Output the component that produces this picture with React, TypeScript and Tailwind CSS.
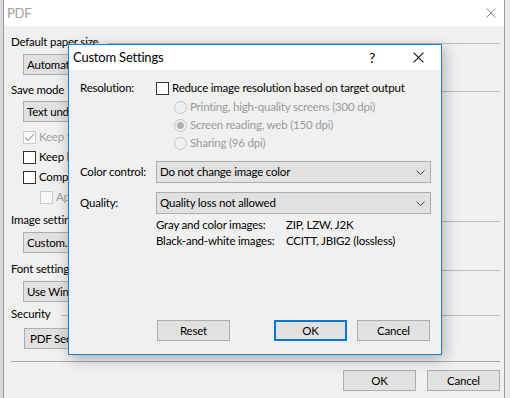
import React from "react";

function Chevron() {
  return (
    <svg width="9" height="5" viewBox="0 0 9 5" className="shrink-0">
      <path d="M0.5 0.5 L4.5 4.5 L8.5 0.5" stroke="#444" strokeWidth="1" fill="none" />
    </svg>
  );
}

function CloseX({ color, size = 10 }: { color: string; size?: number }) {
  return (
    <svg width={size} height={size} viewBox="0 0 10 10">
      <path d="M0.5 0.5 L9.5 9.5 M9.5 0.5 L0.5 9.5" stroke={color} strokeWidth="1" fill="none" />
    </svg>
  );
}

function Box({ disabled, checked }: { disabled?: boolean; checked?: boolean }) {
  return (
    <div
      className={
        "w-[13px] h-[13px] shrink-0 border flex items-center justify-center " +
        (disabled ? "border-[#cccccc] bg-[#f7f7f7]" : "border-[#333333] bg-white")
      }
    >
      {checked && (
        <svg width="11" height="9" viewBox="0 0 11 9">
          <path d="M1 4.5 L4 7.5 L10 1" stroke="#b5b5b5" strokeWidth="1.3" fill="none" />
        </svg>
      )}
    </div>
  );
}

function Radio({ selected }: { selected?: boolean }) {
  return (
    <div className="w-[13px] h-[13px] shrink-0 rounded-full border border-[#c4c4c4] flex items-center justify-center">
      {selected && <div className="w-[7px] h-[7px] rounded-full bg-[#b0b0b0]" />}
    </div>
  );
}

function Header({ label }: { label: string }) {
  return (
    <div className="h-[16px] flex items-center">
      <span>{label}</span>
      <div className="flex-1 h-px bg-[#bcbcbc] ml-[10px] mr-[4px] mt-[2px]" />
    </div>
  );
}

function Combo({ label, className = "" }: { label: string; className?: string }) {
  return (
    <div
      className={
        "h-[21px] w-[220px] ml-[12px] pl-[3px] flex items-center border border-[#adadad] bg-[#e1e1e1] " +
        className
      }
    >
      {label}
    </div>
  );
}

function Btn({ label, focused }: { label: string; focused?: boolean }) {
  return (
    <div
      className={
        "w-[73px] h-[21px] flex items-center justify-center bg-[#e1e1e1] " +
        (focused ? "border-2 border-[#0078d7]" : "border border-[#adadad]")
      }
    >
      {label}
    </div>
  );
}

function Select({ label }: { label: string }) {
  return (
    <div className="flex-1 h-[22px] flex items-center justify-between pl-[3px] pr-[5px] border border-[#adadad] bg-[#e1e1e1]">
      <span>{label}</span>
      <Chevron />
    </div>
  );
}

export default function App() {
  return (
    <div className="relative w-[510px] h-[398px] overflow-hidden bg-[#e4e4e4] text-[11.5px] tracking-[-0.2px] leading-none text-black font-['Segoe_UI','Lato','Noto_Sans',sans-serif]">
      <div className="flex h-full">
        <div className="w-[3px] bg-[#dadada]" />

        {/* background PDF window */}
        <div className="w-[502px] flex flex-col border-x border-[#9a9a9a]">
          <div className="h-[26px] bg-white flex items-center justify-between pl-[3px] pr-[8px]">
            <span className="text-[13px] text-[#a0a0a0]">PDF</span>
            <CloseX color="#8a8a8a" />
          </div>

          <div className="flex-1 bg-[#f0f0f0] pl-[7px] pt-[8px] flex flex-col">
            <Header label="Default paper size" />
            <Combo label="Automatic" className="mt-[4px]" />

            <div className="mt-[7px]">
              <Header label="Save mode" />
            </div>
            <Combo label="Text under image" className="mt-[3px]" />

            <div className="mt-[5px] ml-[12px] flex flex-col">
              <div className="h-[20px] flex items-center gap-[3px] text-[#a0a0a0]">
                <Box disabled checked />
                <span>Keep text</span>
              </div>
              <div className="h-[20px] flex items-center gap-[3px]">
                <Box />
                <span>Keep hyperlinks</span>
              </div>
              <div className="h-[20px] flex items-center gap-[3px]">
                <Box />
                <span>Compress</span>
              </div>
              <div className="h-[20px] flex items-center gap-[3px] pl-[17px] text-[#a0a0a0]">
                <Box disabled />
                <span>Apply</span>
              </div>
            </div>

            <div className="mt-[5px]">
              <Header label="Image settings" />
            </div>
            <Combo label="Custom..." className="mt-[4px] w-[120px]" />

            <div className="mt-[8px]">
              <Header label="Font settings" />
            </div>
            <Combo label="Use Windows fonts" className="mt-[4px]" />

            <div className="mt-[4px]">
              <Header label="Security" />
            </div>
            <Combo label="PDF Security" className="mt-[6px] ml-[13px] pl-[5px] w-[120px]" />

            <div className="mt-[12px] mr-[4px] h-px bg-[#a8a8a8]" />

            <div className="mt-[8px] pr-[4px] flex justify-end gap-[11px]">
              <Btn label="OK" />
              <Btn label="Cancel" />
            </div>
          </div>
        </div>

        <div className="w-[5px] bg-[#e8e8e8]" />
      </div>

      {/* Custom Settings dialog */}
      <div className="absolute left-[68px] top-[44px] w-[374px] h-[311px] border border-[#1883d7] bg-[#f0f0f0] flex flex-col shadow-[2px_4px_14px_rgba(0,0,0,0.28)]">
        <div className="h-[25px] bg-white flex items-center pl-[4px]">
          <span className="text-[13px]">Custom Settings</span>
          <div className="ml-auto flex h-full">
            <div className="w-[46px] flex items-center justify-center text-[14px]">?</div>
            <div className="w-[46px] flex items-center justify-center">
              <CloseX color="#111" size={11} />
            </div>
          </div>
        </div>

        <div className="flex-1 flex flex-col pl-[11px] pr-[10px] pt-[10px]">
          <div className="h-[16px] flex items-center">
            <span className="w-[76px] shrink-0">Resolution:</span>
            <Box />
            <span className="ml-[3px]">Reduce image resolution based on target output</span>
          </div>

          <div className="mt-[2px] ml-[94px] flex flex-col text-[#9a9a9a]">
            <div className="h-[18px] flex items-center gap-[3px]">
              <Radio />
              <span>Printing, high-quality screens (300 dpi)</span>
            </div>
            <div className="h-[18px] flex items-center gap-[3px]">
              <Radio selected />
              <span>Screen reading, web (150 dpi)</span>
            </div>
            <div className="h-[18px] flex items-center gap-[3px]">
              <Radio />
              <span>Sharing (96 dpi)</span>
            </div>
          </div>

          <div className="mt-[9px] flex items-center">
            <span className="w-[76px] shrink-0">Color control:</span>
            <Select label="Do not change image color" />
          </div>

          <div className="mt-[9px] flex items-center">
            <span className="w-[76px] shrink-0">Quality:</span>
            <Select label="Quality loss not allowed" />
          </div>

          <div className="mt-[3px] ml-[76px] grid grid-cols-[130px_1fr]">
            <span className="h-[16px] flex items-center">Gray and color images:</span>
            <span className="h-[16px] flex items-center">ZIP, LZW, J2K</span>
            <span className="h-[16px] flex items-center">Black-and-white images:</span>
            <span className="h-[16px] flex items-center">CCITT, JBIG2 (lossless)</span>
          </div>

          <div className="mt-[71px] flex">
            <div className="ml-[77px]">
              <Btn label="Reset" />
            </div>
            <div className="ml-[44px]">
              <Btn label="OK" focused />
            </div>
            <div className="ml-[10px]">
              <Btn label="Cancel" />
            </div>
          </div>
        </div>
      </div>
    </div>
  );
}
